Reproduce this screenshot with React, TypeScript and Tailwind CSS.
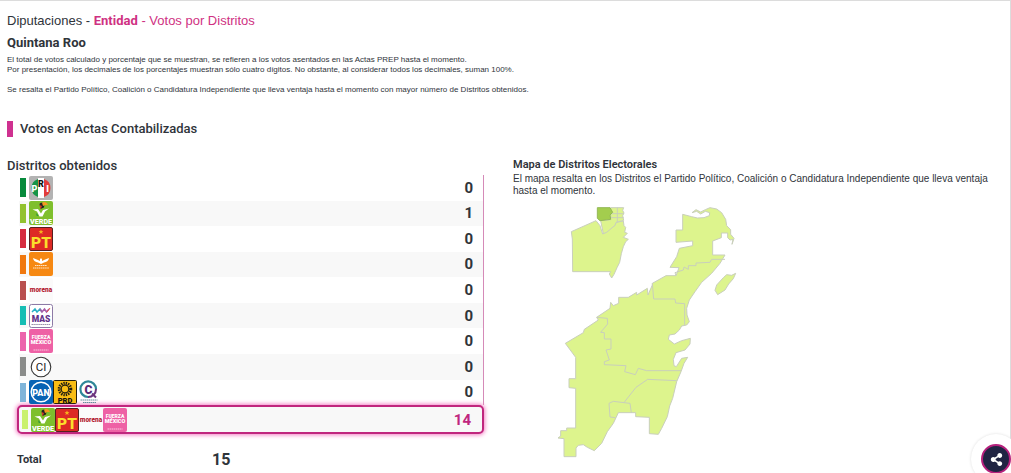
import React from 'react';
import { FaShareAlt } from 'react-icons/fa';

type PartyId = 'pri' | 'verde' | 'pt' | 'mc' | 'morena' | 'mas' | 'fuerza' | 'ci' | 'pan' | 'prd' | 'confianza';

const ROWS: { color: string; parties: PartyId[]; votes: number }[] = [
  { color: 'bg-[#078a3c]', parties: ['pri'], votes: 0 },
  { color: 'bg-[#93c22f]', parties: ['verde'], votes: 1 },
  { color: 'bg-[#d62c40]', parties: ['pt'], votes: 0 },
  { color: 'bg-[#f0780f]', parties: ['mc'], votes: 0 },
  { color: 'bg-[#b9504f]', parties: ['morena'], votes: 0 },
  { color: 'bg-[#16bdb4]', parties: ['mas'], votes: 0 },
  { color: 'bg-[#ec64ac]', parties: ['fuerza'], votes: 0 },
  { color: 'bg-[#8a8c8a]', parties: ['ci'], votes: 0 },
  { color: 'bg-[#80b5da]', parties: ['pan', 'prd', 'confianza'], votes: 0 },
];

const LEADER: PartyId[] = ['verde', 'pt', 'morena', 'fuerza'];

const SANS = "font-['Liberation_Sans',Arial,sans-serif]";

const NAMES: Record<PartyId, string> = {
  pri: 'PRI',
  verde: 'Partido Verde',
  pt: 'PT',
  mc: 'Movimiento Ciudadano',
  morena: 'morena',
  mas: 'MAS',
  fuerza: 'Fuerza por México',
  ci: 'Candidatura Independiente',
  pan: 'PAN',
  prd: 'PRD',
  confianza: 'Confianza',
};

const ART: Record<PartyId, React.ReactNode> = {
  pri: (
    <>
      <rect width="24" height="24" rx="2" fill="#b3b3b3" />
      <path d="M9 3A9.500 9.500 0 0 0 9 21z" fill="#159447" />
      <rect x="9" y="2" width="6" height="20" fill="#fff" />
      <path d="M15 3A9.500 9.500 0 0 1 15 21z" fill="#e23b3b" />
      <text x="5.500" y="15.500" fontSize="9" fill="#fff">P</text>
      <text x="12" y="11" fontSize="9" fill="#111">R</text>
      <text x="18.500" y="15.500" fontSize="9" fill="#fff">I</text>
    </>
  ),
  verde: (
    <>
      <rect width="24" height="24" rx="2" fill="#7fbf2c" />
      <path d="M3.500 8.500L9 8l3 4.500 2-3.500 6-1.500-4 3-2.500 5h-3L8 10.500z" fill="#fff" />
      <path d="M10.500 3c1-2 4.500-1.500 5 .500l-.5 3-3.500 1.500z" fill="#242321" />
      <path d="M13 1.800c2.500-1.500 5-.500 6 2.500-2-1-4 0-5 .800z" fill="#f59a20" />
      <path d="M10.500 4l2.500 1-1.500 3.500z" fill="#d83b2b" />
      <path d="M7.500 12l2 3-2-.5z" fill="#178a3e" />
      <text x="12" y="22.800" fontSize="7.200" fill="#fff">VERDE</text>
    </>
  ),
  pt: (
    <>
      <rect x="0.500" y="0.500" width="23" height="23" rx="1.500" fill="#dd2a25" stroke="#56201f" />
      <path d="M12 2.500l.7 1.600 1.700.1-1.300 1.100.5 1.700-1.600-.9-1.600.9.5-1.700-1.300-1.100 1.700-.1z" fill="#f8b21d" />
      <text x="12" y="20.800" fontSize="15.500" fill="#fbdf2c">PT</text>
    </>
  ),
  mc: (
    <>
      <rect width="24" height="24" rx="2" fill="#f68812" />
      <path d="M4 6l5 2 2 1v-2l1-.8 1 .8v2l2-1 5-2c-.5 3-2.500 4-5 4.500L12 12l-3-1.500C6.500 10 4.500 9 4 6z" fill="#fff" />
      <path d="M6 13.500h12M4 16h16" stroke="#fde3c4" strokeDasharray="1.500 .4" />
    </>
  ),
  morena: (
    <>
      <rect width="24" height="24" rx="2" fill="#fbfafa" />
      <text x="12" y="14" fontSize="6.500" fill="#b32031">morena</text>
    </>
  ),
  mas: (
    <>
      <rect x="0.500" y="0.500" width="23" height="23" rx="2" fill="#fff" stroke="#8d7aa6" />
      <path d="M3 8l3-3 2 3 3-3 2 3" fill="none" stroke="#27b1c5" strokeWidth="1.500" />
      <path d="M11 5l2 3 2.500-3 2 3L20 5" fill="none" stroke="#a65ea9" strokeWidth="1.500" />
      <path d="M18 8l3-4" stroke="#e5544c" />
      <text x="12" y="18" fontSize="8.500" fill="#633289">MAS</text>
      <path d="M2.500 20.500h19" stroke="#9b94aa" strokeDasharray="1.500 .4" />
    </>
  ),
  fuerza: (
    <>
      <rect width="24" height="24" rx="2" fill="#ee61a5" />
      <text x="12" y="10" fontSize="5" fill="#fff">FUERZA</text>
      <text x="12" y="15" fontSize="5.500" fill="#fff">MÉXICO</text>
      <path d="M4.500 21h15" stroke="#f9c5df" strokeDasharray="1.500 .5" />
    </>
  ),
  ci: (
    <>
      <circle cx="12" cy="12" r="9.800" fill="#fff" stroke="#333" strokeWidth="1.100" />
      <text x="12" y="16" fontSize="11.500" fontWeight="400" fill="#222">CI</text>
    </>
  ),
  pan: (
    <>
      <rect width="24" height="24" rx="2" fill="#0763b4" />
      <circle cx="12" cy="12" r="9.800" fill="#0763b4" stroke="#fff" strokeWidth="1.500" />
      <text x="12" y="15.800" fontSize="9" fill="#fff">PAN</text>
    </>
  ),
  prd: (
    <>
      <rect x="0.500" y="0.500" width="23" height="23" rx="1" fill="#f9bd13" stroke="#27210d" />
      <circle cx="12" cy="9" r="5.800" fill="none" stroke="#221e10" strokeWidth="3" strokeDasharray="1.300 .978" />
      <circle cx="12" cy="9" r="3.800" fill="#f9bd13" stroke="#221e10" strokeWidth="1.200" />
      <text x="12" y="22.500" fontSize="7.500" fill="#111">PRD</text>
    </>
  ),
  confianza: (
    <>
      <path d="M11 17A7.800 7.800 0 1 1 19 9" fill="none" stroke="#2f8798" strokeWidth="2.200" />
      <path d="M19 9a7.800 7.800 0 0 1-8 8M15 13.500l4 4" fill="none" stroke="#6c347f" strokeWidth="2" />
      <text x="11.500" y="13.500" fontSize="12" fill="#5b2b77">C</text>
      <path d="M3.500 20h17M6 22.500h13" stroke="#658d9c" strokeDasharray="1.500 .5" />
    </>
  ),
};

const PartyLogo: React.FC<{ id: PartyId }> = ({ id }) => (
  <svg viewBox="0 0 24 24" role="img" aria-label={NAMES[id]} className="w-6 h-6 shrink-0 font-['Roboto',sans-serif] font-black" textAnchor="middle">
    {ART[id]}
  </svg>
);

const DistrictMap: React.FC = () => (
  <svg
    viewBox="0 0 570 780"
    role="img"
    aria-label="Mapa de Distritos Electorales"
    className="mt-[3px] w-[190px] h-[260px] ml-[37px]"
    fill="#ddf48d"
    stroke="#c9cfbc"
    strokeWidth="3"
    strokeLinejoin="round"
  >
    {/* Cancún inset */}
    <g transform="translate(30 -15)">
      <path d="M34 110L108 77L120 92L128 117L140 110L150 100L165 91L168 82L190 78L192 92L197 97L194 112L202 115L190 127L205 133L197 140L190 155L184 176L179 202L171 218L162 238L155 249L148 237L152 230H38L37 132z" />
      <path d="M152 38H191L188 46L192 54L188 62L191 76L168 82L165 91L140 112L130 116L122 77L152 74z" />
      <path d="M152 56H191M172 38V82M152 68H191" fill="none" />
      <path d="M112 38H150L158 52L150 60L152 73L120 77L112 70z" fill="#a3cd4e" stroke="#94b957" />
    </g>
    {/* mainland */}
    <path d="M398 43L425 50L442 54L462 53L478 47L479 38L466 34L452 42L440 34L426 38L438 29L452 36L466 29L480 23L500 27L515 38L527 58L530 77L542 89V103L552 115L546 133L549 118L540 120L533 113V99H514V113L488 123V165H525L510 190L485 220L455 247L435 275L418 300L410 325L411 345L418 365L410 375L395 378L388 390L375 402L358 405L355 418L373 432L395 422L421 415L420 432L405 450L378 458L370 478L372 497L379 500L395 475L413 472L402 490L393 515L380 545L368 595L359 618L352 650L335 685L325 703L298 701V652L257 650V638H205L190 670L172 695L155 730L133 752L112 742L100 734L85 736L78 744V770H42V716L24 714L32 708V692H50V684H77V565L57 563V536H77V472L46 430L100 398L103 388L145 360L140 352L180 325L182 307L190 317L206 310V292H235L260 277V285L292 265L294 285L307 255V250L348 227H378L387 203L360 202L380 170L388 145L428 137V123L378 127V90H398z" />
    <path
      d="M378 227L375 218L400 210L402 201L415 208V197H438V189L480 187L485 178H525M307 250L311 297H375L377 309L404 311V375M140 352L172 355L173 372L152 397L163 398V417H183V447L168 450L178 480L163 485V494L228 497L224 515L256 524L265 505L290 512H393M380 542L293 538L258 562L228 600L222 608L240 610L244 638M222 608L190 604L177 610L180 651L196 653"
      fill="none"
    />
    {/* Cozumel */}
    <path d="M557 220L545 226L530 224L520 233L500 255L495 271L503 284L525 270L536 252L550 236z" />
  </svg>
);

const App: React.FC = () => {
  return (
    <main className="min-h-screen border-t border-r border-[#dcdcdc] bg-white pt-[10px] px-[7px] font-['Roboto',sans-serif] text-[#2f343a]">
      <header>
        <h1 className={`text-[13px] leading-5 ${SANS}`}>
          Diputaciones - <a href="#entidad" className="font-['Roboto',sans-serif] font-bold text-[#cf3182]">Entidad</a>{' '}
          <span className="text-[#cf3182]">- Votos por Distritos</span>
        </h1>
        <h2 className="mt-[2px] text-[13px] leading-5 font-bold">Quintana Roo</h2>
        <p className={`mt-[2px] text-[8px] leading-[10px] ${SANS}`}>
          El total de votos calculado y porcentaje que se muestran, se refieren a los votos asentados en las Actas PREP hasta el momento.
          <br />
          Por presentación, los decimales de los porcentajes muestran sólo cuatro dígitos. No obstante, al considerar todos los decimales, suman 100%.
        </p>
        <p className={`mt-[10px] text-[8px] leading-[10px] ${SANS}`}>
          Se resalta el Partido Político, Coalición o Candidatura Independiente que lleva ventaja hasta el momento con mayor número de Distritos obtenidos.
        </p>
      </header>

      <h3 className="mt-[26px] border-l-[6px] border-[#cf3190] pl-[7px] text-[13px] leading-4 font-medium">Votos en Actas Contabilizadas</h3>

      <div className="mt-5 grid grid-cols-2 gap-4">
        <section>
          <h4 className="text-[13px] leading-[18px] font-medium">Distritos obtenidos</h4>
          <table className="block ml-[10px] mr-[13px]">
            <tbody className="block">
              <tr className="block">
                <td className="block p-0">
                  <table className="block">
                    <tbody className="flex flex-col h-[230px] ml-[2px] border-r border-[#d58ab8]">
                      {ROWS.map((row) => (
                        <tr key={row.parties[0]} className="flex flex-1 items-center pl-px even:bg-[#f8f8f8]">
                          <td className={`w-[6px] h-[19px] p-0 ${row.color}`}></td>
                          <td className="flex flex-1 ml-[3px] p-0">
                            {row.parties.map((id) => (
                              <PartyLogo key={id} id={id} />
                            ))}
                          </td>
                          <td className="p-0 pr-[10px] text-[15px] leading-5 font-bold">{row.votes}</td>
                        </tr>
                      ))}
                    </tbody>
                  </table>
                </td>
              </tr>
              <tr className="flex h-[29px] items-center rounded-[5px] border-2 border-[#c0267e] bg-[#f8f8f8] pl-[3px] shadow-[0_0_4px_1px_#f47fc4]">
                <td className="w-[6px] h-[19px] p-0 bg-[#caf16e]"></td>
                <td className="flex flex-1 ml-[3px] p-0">
                  {LEADER.map((id) => (
                    <PartyLogo key={id} id={id} />
                  ))}
                </td>
                <td className="p-0 pr-[11px] text-[15px] leading-5 font-bold text-[#c0267e]">14</td>
              </tr>
            </tbody>
          </table>
          <p className="mt-4 ml-[10px] flex items-center font-bold leading-5">
            <span className="w-[195px] text-[11px]">Total</span>
            <span className="text-[16px]">15</span>
          </p>
        </section>

        <section>
          <h4 className="text-[11px] leading-4 font-semibold">Mapa de Distritos Electorales</h4>
          <p className={`text-[10px] leading-3 ${SANS}`}>
            El mapa resalta en los Distritos el Partido Político, Coalición o Candidatura Independiente que lleva ventaja hasta el momento.
          </p>
          <DistrictMap />
        </section>
      </div>

      <div className="fixed -right-[10px] -bottom-[11px] flex h-[50px] w-[50px] items-center justify-center rounded-full bg-white shadow-[0_0_3px_#dddddd]">
        <button
          type="button"
          aria-label="Compartir"
          className="flex h-[30px] w-[30px] items-center justify-center rounded-full border-2 border-[#b5207c] bg-[#202443] text-white"
        >
          <FaShareAlt className="h-[13px] w-[13px]" />
        </button>
      </div>
    </main>
  );
};

export default App;
